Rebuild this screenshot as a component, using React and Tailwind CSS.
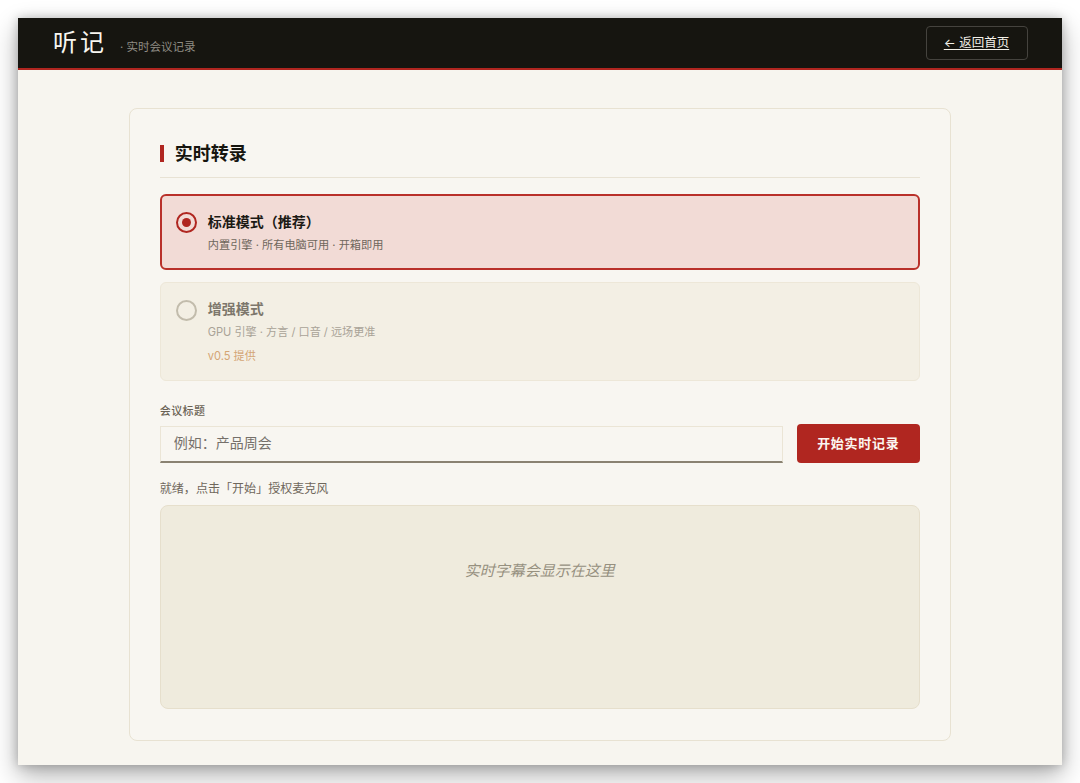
const cjk = "font-['Inter','Noto_Sans_CJK_SC',sans-serif]";

export default function App() {
  return (
    <div className={`h-[783px] w-[1080px] overflow-hidden bg-white pl-[18px] pt-[18px] ${cjk}`}>
      <div className="flex h-[747px] w-[1043.5px] flex-col bg-[#f7f5ef] shadow-[0_10px_24px_rgba(0,0,0,0.32),0_0_10px_rgba(0,0,0,0.22)]">
        <header className="flex h-[52px] shrink-0 items-center justify-between border-b-2 border-[#b02620] bg-[#161510] pl-[35px] pr-[34px]">
          <div className="flex items-end">
            <span className="text-[24px] leading-[32px] font-normal tracking-[3px] text-[#f8f6f0]">听记</span>
            <span className="mb-[4px] ml-[13px] text-[11.5px] leading-[16px] text-[#8f8c84]">· 实时会议记录</span>
          </div>
          <button className="flex h-[34.5px] w-[102px] items-center justify-center rounded-[4px] border border-[#45433e] text-[12.5px] text-[#f3f0e8] underline underline-offset-2">
            ← 返回首页
          </button>
        </header>
        <main className="flex flex-1 justify-center pt-[38px]">
          <section className="flex h-[632.5px] w-[822px] flex-col rounded-[8px] border border-[#e8e2d2] bg-[#f8f6f1] px-[30px] pt-[30px]">
            <div className="flex h-[39px] shrink-0 items-start border-b border-[#e8e2d4]">
              <h2 className="mt-[6px] border-l-4 border-[#b02620] pl-[11px] text-[18px] leading-[17px] font-bold text-[#16150f]">实时转录</h2>
            </div>
            <div className="mt-[16px] flex h-[76px] shrink-0 items-start rounded-[6px] border-2 border-[#b9302a] bg-[#f2dbd6] pl-[14px] pt-[16px]">
              <span className="flex h-[21px] w-[21px] shrink-0 items-center justify-center rounded-full border-2 border-[#b02620]">
                <span className="h-[9px] w-[9px] rounded-full bg-[#b02620]" />
              </span>
              <div className="ml-[11px]">
                <div className="text-[14px] leading-[20px] font-bold text-[#1c1a15]">标准模式（推荐）</div>
                <div className="mt-[4px] text-[11.2px] leading-[18px] text-[#6f675c]">内置引擎 · 所有电脑可用 · 开箱即用</div>
              </div>
            </div>
            <div className="mt-[12px] flex h-[99px] shrink-0 items-start rounded-[6px] border border-[#ede7d8] bg-[#f3efe4] pl-[15px] pt-[17px]">
              <span className="h-[21px] w-[21px] shrink-0 rounded-full border-2 border-[#c2bcac]" />
              <div className="ml-[11px] -mt-[1px]">
                <div className="text-[14px] leading-[20px] font-bold text-[#7d776c]">增强模式</div>
                <div className="mt-[4px] text-[11.1px] leading-[18px] text-[#a9a397]">GPU 引擎 · 方言 / 口音 / 远场更准</div>
                <div className="mt-[6px] text-[11.1px] leading-[18px] text-[#d3a574]">v0.5 提供</div>
              </div>
            </div>
            <label className="mt-[21px] text-[11px] leading-[18px] tracking-[0.4px] font-medium text-[#6a6254]">会议标题</label>
            <div className="mt-[4px] flex h-[38.5px] shrink-0 items-end justify-between">
              <input
                readOnly
                placeholder="例如：产品周会"
                className="h-[36.5px] w-[623.5px] border border-b-2 border-[#ebe5d6] border-b-[#8a8272] bg-[#f8f6f1] px-[13px] pb-[2px] text-[14px] outline-none placeholder:text-[#75706a]"
              />
              <button className="h-[38.5px] w-[123px] rounded-[4px] bg-[#b02620] text-[13px] tracking-[0.7px] font-semibold text-[#fbf6f0]">开始实时记录</button>
            </div>
            <p className="mt-[17.5px] text-[12.05px] leading-[18px] text-[#6f675c]">就绪，点击「开始」授权麦克风</p>
            <div className="mt-[7px] flex h-[204px] shrink-0 justify-center rounded-[8px] border border-[#e6dfcc] bg-[#efebdd] pt-[54px]">
              <span className="text-[15px] leading-[21px] text-[#96907f] italic">实时字幕会显示在这里</span>
            </div>
          </section>
        </main>
      </div>
    </div>
  );
}
